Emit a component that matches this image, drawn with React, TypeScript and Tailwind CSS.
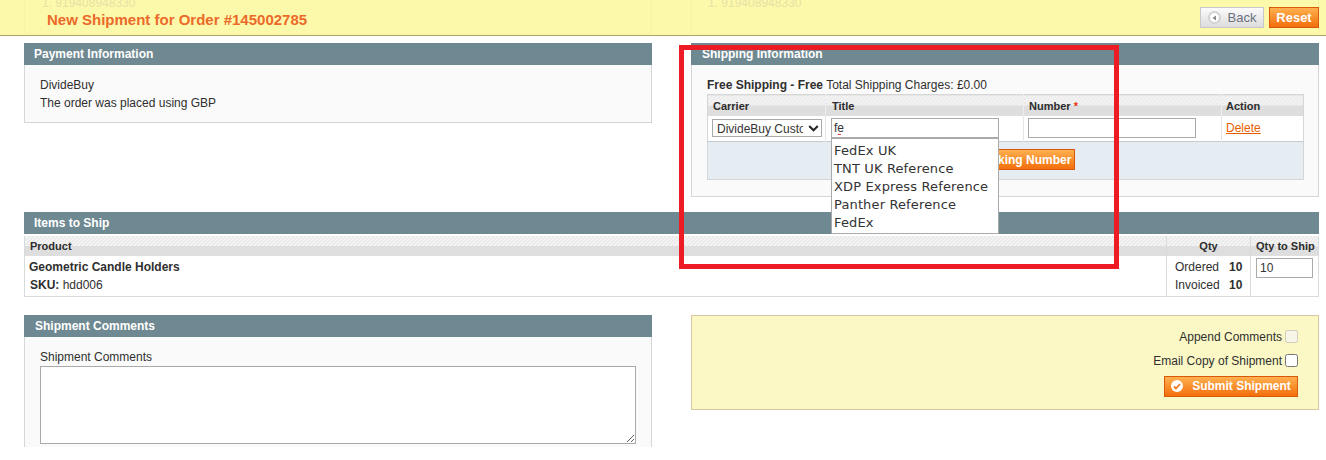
import React from 'react';

const hatch =
  'bg-[linear-gradient(to_bottom,transparent_50%,#dedede_50%),repeating-linear-gradient(135deg,#e8e8e8_0,#e8e8e8_1.414px,#f6f6f6_1.414px,#f6f6f6_2.828px)]';
const orangeBtn =
  'bg-[linear-gradient(to_bottom,#ffb04f,#f36f0c)] border border-[#d85909] text-white font-bold';

const SectionHead = ({ title, className = 'pl-[10px]' }: { title: string; className?: string }) => (
  <div className={`h-[22px] bg-[#6f8992] text-white font-bold leading-[22px] ${className}`}>{title}</div>
);

const Th = ({ children, className = '' }: { children: React.ReactNode; className?: string }) => (
  <th className={`p-0 px-[5px] text-[11px] font-bold whitespace-nowrap text-[#2d2d2d] ${hatch} ${className}`}>
    {children}
  </th>
);

const titleOptions = ['FedEx UK', 'TNT UK Reference', 'XDP Express Reference', 'Panther Reference', 'FedEx'];

export default function App() {
  return (
    <div className="relative h-[460px] w-[1326px] overflow-hidden bg-white font-['Liberation_Sans',Arial,sans-serif] text-[12px] text-[#2f2f2f]">
      {/* sticky page header */}
      <div className="h-[36px] overflow-hidden border-b border-[#a9a36b] bg-[#fdf9ab]">
        <div className="mx-[24px] grid grid-cols-[628px_628px] gap-[39px]">
          <div className="h-[34px] border-x border-b border-[#f8f3a0] pl-[22px]">
            <div className="-ml-[5px] -mt-[4px] h-[14px] leading-[14px] text-[#e5e2a6]">1. 919408948330</div>
            <div className="mt-[1px] text-[15px] font-bold leading-[17px] text-[#eb6a2a]">
              New Shipment for Order #145002785
            </div>
          </div>
          <div className="h-[34px] border-x border-b border-[#f8f3a0]">
            <div className="-mt-[4px] ml-[16px] h-[14px] leading-[14px] text-[#e5e2a6]">1. 919408948330</div>
          </div>
        </div>
      </div>
      <div className="absolute right-[7px] top-[7px] flex gap-[5px]">
        <button className="flex h-[21px] w-[64px] items-center justify-center gap-[7px] border border-[#c8c8c8] bg-[linear-gradient(to_bottom,#fbfbfb,#dcdcdc)] text-[13px] text-[#6a7280]">
          <span className="flex h-[13px] w-[13px] items-center justify-center rounded-full border-2 border-[#d2d2d2] bg-white">
            <svg width="5" height="6" viewBox="0 0 5 6">
              <path d="M4 0.5V5.5L0.5 3Z" fill="#888" />
            </svg>
          </span>
          Back
        </button>
        <button className={`h-[21px] w-[50px] text-[13px] ${orangeBtn}`}>Reset</button>
      </div>

      <div className="px-[24px] pr-[7px] pt-[7px]">
        <div className="grid grid-cols-[628px_628px] items-start gap-[39px]">
          <section>
            <SectionHead title="Payment Information" />
            <div className="h-[58px] border border-t-0 border-[#d6d6d6] bg-[#fafafa] pl-[15px] pt-[11px] leading-[18px]">
              <div>DivideBuy</div>
              <div>The order was placed using GBP</div>
            </div>
          </section>

          <section>
            <SectionHead title="Shipping Information" className="pl-[11px]" />
            <div className="h-[132px] border border-t-0 border-[#d6d6d6] bg-[#fafafa] px-[15px] pt-[12px]">
              <div className="h-[17px] leading-[16px]">
                <b>Free Shipping - Free</b> Total Shipping Charges: £0.00
              </div>
              <table className="w-[596px] table-fixed border-collapse border border-[#d6d6d6]">
                <colgroup>
                  <col className="w-[118px]" />
                  <col className="w-[198px]" />
                  <col className="w-[198px]" />
                  <col className="w-[82px]" />
                </colgroup>
                <thead>
                  <tr className="h-[21px] text-left">
                    <Th className="border-r border-[#eceff0] pt-[2px]">Carrier</Th>
                    <Th className="border-r border-[#eceff0] pl-[6px] pt-[2px]">Title</Th>
                    <Th className="border-r border-[#eceff0] pt-[2px]">
                      Number <span className="text-[#eb340a]">*</span>
                    </Th>
                    <Th className="pl-[4px] pt-[2px]">Action</Th>
                  </tr>
                </thead>
                <tbody>
                  <tr className="h-[26px] bg-white">
                    <td className="border-r border-[#e6e6e6] p-0 pl-[4px]">
                      <div className="relative w-[110px]">
                        <select className="block h-[18px] w-[110px] appearance-none border border-[#aaa] bg-white pl-[4px] pr-[18px] text-[12px] text-[#333]">
                          <option>DivideBuy Custom</option>
                        </select>
                        <svg className="absolute right-[3px] top-[6px]" width="11" height="7" viewBox="0 0 11 7">
                          <path d="M1.2 1L5.5 5.3L9.8 1" fill="none" stroke="#222" strokeWidth="2" />
                        </svg>
                      </div>
                    </td>
                    <td className="relative border-r border-[#e6e6e6] p-0 pl-[5px]">
                      <input
                        readOnly
                        value="fe"
                        className="block h-[20px] w-[168px] border border-[#aaa] bg-white px-[2px] text-[12px] text-[#333] underline decoration-[#d33] decoration-wavy outline-none"
                      />
                      <ul className="absolute left-[5px] top-[22px] z-10 h-[96px] w-[168px] border border-[#aaa] bg-white pl-[2px] pt-[3px] font-['DejaVu_Sans',Verdana,sans-serif] text-[13px] leading-[18px] tracking-[0.14px] text-[#333]">
                        {titleOptions.map((o) => (
                          <li key={o}>{o}</li>
                        ))}
                      </ul>
                    </td>
                    <td className="border-r border-[#e6e6e6] p-0 pl-[4px]">
                      <input className="block h-[20px] w-[168px] border border-[#aaa] bg-white" />
                    </td>
                    <td className="p-0 pl-[4px]">
                      <a className="text-[#eb5e00] underline">Delete</a>
                    </td>
                  </tr>
                </tbody>
                <tfoot>
                  <tr className="h-[38px] border-t border-[#c4ccd2] bg-[#e5ecf2]">
                    <td colSpan={4} className="p-0 pt-[7px] align-top">
                      <button className={`ml-[227px] block h-[21px] w-[140px] pl-[8px] ${orangeBtn}`}>
                        Add Tracking Number
                      </button>
                    </td>
                  </tr>
                </tfoot>
              </table>
            </div>
          </section>
        </div>

        <section className="mt-[15px]">
          <SectionHead title="Items to Ship" />
          <table className="w-[1295px] table-fixed border-collapse border border-[#d6dcdc]">
            <colgroup>
              <col />
              <col className="w-[84px]" />
              <col className="w-[68px]" />
            </colgroup>
            <thead>
              <tr className="h-[21px] border-t-[2px] border-white">
                <Th className="border-r border-[#d6dcdc] text-left">Product</Th>
                <Th className="border-r border-[#d6dcdc] text-center">Qty</Th>
                <Th className="px-0 text-center">Qty to Ship</Th>
              </tr>
            </thead>
            <tbody>
              <tr className="h-[40px] bg-white">
                <td className="border-r border-[#d6dcdc] p-0 pl-[5px] align-top leading-[18px]">
                  <div className="-ml-[1px] mt-[2px] font-bold">Geometric Candle Holders</div>
                  <div>
                    <b>SKU:</b> hdd006
                  </div>
                </td>
                <td className="border-r border-[#d6dcdc] p-0 pl-[8px] align-top leading-[18px]">
                  <div className="mt-[2px] flex">
                    <span className="w-[54px]">Ordered</span>
                    <b>10</b>
                  </div>
                  <div className="flex">
                    <span className="w-[54px]">Invoiced</span>
                    <b>10</b>
                  </div>
                </td>
                <td className="p-0 pl-[5px] align-top">
                  <input
                    readOnly
                    value="10"
                    className="mt-[2px] block h-[20px] w-[57px] border border-[#aaa] bg-white px-[3px] text-[12px] text-[#333]"
                  />
                </td>
              </tr>
            </tbody>
          </table>
        </section>

        <div className="mt-[18px] grid grid-cols-[628px_628px] items-start gap-[39px]">
          <section>
            <SectionHead title="Shipment Comments" className="pl-[11px]" />
            <div className="h-[110px] border-x border-[#d6d6d6] bg-[#fafafa] px-[15px] pt-[12px]">
              <div className="h-[17px] leading-[16px]">Shipment Comments</div>
              <textarea className="block h-[78px] w-[596px] border border-[#aaa] bg-white" />
            </div>
          </section>
          <section className="flex h-[95px] flex-col items-end border border-[#d6c9a0] bg-[#fbf8c6] pr-[20px] pt-[13px]">
            <label className="flex h-[16px] items-center gap-[3px]">
              Append Comments
              <input type="checkbox" disabled className="m-0 h-[13px] w-[13px]" />
            </label>
            <label className="mt-[8px] flex h-[16px] items-center gap-[3px]">
              Email Copy of Shipment
              <input type="checkbox" className="m-0 h-[13px] w-[13px]" />
            </label>
            <button className={`mt-[7px] flex h-[21px] w-[134px] items-center justify-center gap-[9px] ${orangeBtn}`}>
              <span className="flex h-[12px] w-[12px] items-center justify-center rounded-full bg-white">
                <svg width="8" height="7" viewBox="0 0 8 7">
                  <path d="M1 3.5L3 5.5L7 1" fill="none" stroke="#f07a1a" strokeWidth="1.8" />
                </svg>
              </span>
              Submit Shipment
            </button>
          </section>
        </div>
      </div>

      {/* red annotation drawn on top of the screenshot */}
      <div className="pointer-events-none absolute left-[679px] top-[45px] z-20 h-[224px] w-[440px] border-[5px] border-[#ed1c24]" />
    </div>
  );
}
